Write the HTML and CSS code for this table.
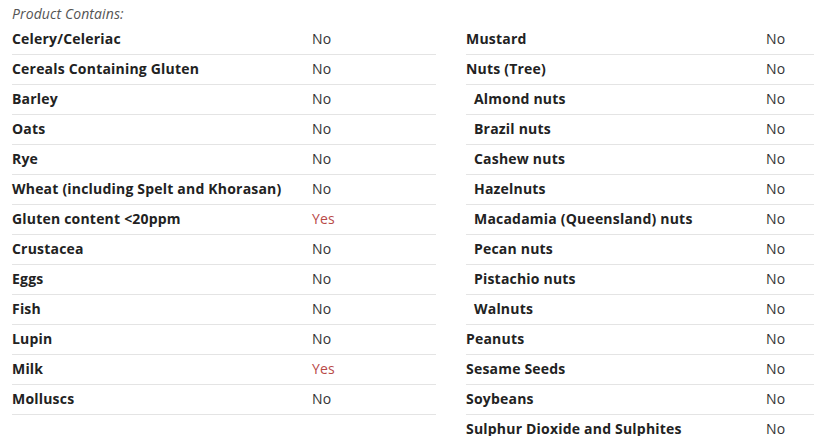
FILE: index.html
```html
<!DOCTYPE html>
<html>
<head>
<meta charset="utf-8">
<link rel="stylesheet" href="styles.css">
</head>
<body>
<div class="page">
  <div class="heading">Product Contains:</div>
  <div class="columns">
    <div class="table">
      <div class="row"><span class="label">Celery/Celeriac</span><span class="value">No</span></div>
      <div class="row"><span class="label">Cereals Containing Gluten</span><span class="value">No</span></div>
      <div class="row"><span class="label">Barley</span><span class="value">No</span></div>
      <div class="row"><span class="label">Oats</span><span class="value">No</span></div>
      <div class="row"><span class="label">Rye</span><span class="value">No</span></div>
      <div class="row"><span class="label">Wheat (including Spelt and Khorasan)</span><span class="value">No</span></div>
      <div class="row"><span class="label">Gluten content &lt;20ppm</span><span class="value yes">Yes</span></div>
      <div class="row"><span class="label">Crustacea</span><span class="value">No</span></div>
      <div class="row"><span class="label">Eggs</span><span class="value">No</span></div>
      <div class="row"><span class="label">Fish</span><span class="value">No</span></div>
      <div class="row"><span class="label">Lupin</span><span class="value">No</span></div>
      <div class="row"><span class="label">Milk</span><span class="value yes">Yes</span></div>
      <div class="row"><span class="label">Molluscs</span><span class="value">No</span></div>
    </div>
    <div class="table">
      <div class="row"><span class="label">Mustard</span><span class="value">No</span></div>
      <div class="row"><span class="label">Nuts (Tree)</span><span class="value">No</span></div>
      <div class="row"><span class="label sub">Almond nuts</span><span class="value">No</span></div>
      <div class="row"><span class="label sub">Brazil nuts</span><span class="value">No</span></div>
      <div class="row"><span class="label sub">Cashew nuts</span><span class="value">No</span></div>
      <div class="row"><span class="label sub">Hazelnuts</span><span class="value">No</span></div>
      <div class="row"><span class="label sub">Macadamia (Queensland) nuts</span><span class="value">No</span></div>
      <div class="row"><span class="label sub">Pecan nuts</span><span class="value">No</span></div>
      <div class="row"><span class="label sub">Pistachio nuts</span><span class="value">No</span></div>
      <div class="row"><span class="label sub">Walnuts</span><span class="value">No</span></div>
      <div class="row"><span class="label">Peanuts</span><span class="value">No</span></div>
      <div class="row"><span class="label">Sesame Seeds</span><span class="value">No</span></div>
      <div class="row"><span class="label">Soybeans</span><span class="value">No</span></div>
      <div class="row"><span class="label">Sulphur Dioxide and Sulphites</span><span class="value">No</span></div>
    </div>
  </div>
</div>
</body>
</html>
```
FILE: styles.css
```css
html, body {
  margin: 0;
  padding: 0;
  background: #ffffff;
  overflow: hidden;
}
body {
  font-family: "Open Sans", "Liberation Sans", sans-serif;
  font-size: 14px;
  color: #333333;
}
.page {
  padding: 0 0 0 12px;
  width: 878px;
}
.heading {
  font-style: italic;
  color: #555555;
  line-height: 20px;
  padding: 4px 0 1px 0;
  letter-spacing: 0.1px;
}
.columns {
  display: grid;
  grid-template-columns: 424px 424px;
  column-gap: 30px;
  align-items: start;
}
.row {
  display: grid;
  grid-template-columns: 300px 1fr;
  height: 29px;
  line-height: 28px;
  border-bottom: 1px solid #e4e4e4;
}
.label {
  font-weight: 700;
  color: #222222;
  white-space: nowrap;
  letter-spacing: 0.2px;
}
.label.sub {
  padding-left: 8px;
}
.value {
  color: #333333;
  letter-spacing: 0.2px;
}
.value.yes {
  color: #b94a48;
}
```
